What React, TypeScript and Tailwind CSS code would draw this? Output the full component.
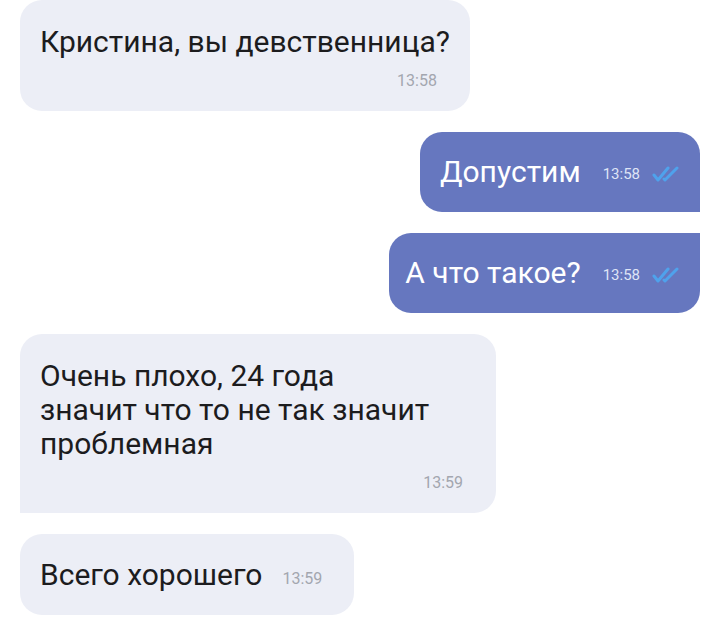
const Checks = () => (
  <svg width="28" height="16" viewBox="0 0 28 16" className="shrink-0">
    <path
      d="M2 9l4 5L16 2M12 13l1 1L25 2"
      stroke="#4fa2ec"
      strokeWidth="3"
      fill="none"
      strokeLinecap="round"
      strokeLinejoin="round"
    />
  </svg>
);

const App = () => {
  return (
    <div className="flex h-[629px] w-[719px] flex-col gap-[21px] overflow-hidden bg-white pl-5 pr-[19px] font-['Roboto',sans-serif] text-[30px] leading-[34px] text-[#1c1c1e]">
      {/* Incoming */}
      <div className="flex w-fit flex-col rounded-[22px] bg-[#eceef6] pb-[20px] pl-5 pr-5 pt-[25px]">
        <p>Кристина, вы девственница?</p>
        <span className="mr-[13px] mt-3 self-end text-[16px] leading-5 text-[#a3a6af]">13:58</span>
      </div>

      {/* Outgoing */}
      <div className="flex flex-col items-end gap-[21px]">
        <div className="flex h-[80px] items-center rounded-[22px] rounded-br-none bg-[#6677bf] pl-5 pr-5 text-white">
          <span>Допустим</span>
          <span className="ml-[22px] mt-[4px] text-[15px] leading-5 text-[#dfe4f6]">13:58</span>
          <span className="ml-[12px] mt-[4px]">
            <Checks />
          </span>
        </div>
        <div className="flex h-[80px] items-center rounded-[22px] rounded-tr-none bg-[#6677bf] pl-4 pr-5 text-white">
          <span>А что такое?</span>
          <span className="ml-[22px] mt-[4px] text-[15px] leading-5 text-[#dfe4f6]">13:58</span>
          <span className="ml-[12px] mt-[4px]">
            <Checks />
          </span>
        </div>
      </div>

      {/* Incoming group */}
      <div className="flex w-[476px] flex-col rounded-[22px] rounded-bl-none bg-[#eceef6] pb-[20px] pl-5 pr-5 pt-[25px]">
        <p>
          Очень плохо, 24 года
          <br />
          значит что то не так значит
          <br />
          проблемная
        </p>
        <span className="mr-[13px] mt-3 self-end text-[16px] leading-5 text-[#a3a6af]">13:59</span>
      </div>
      <div className="flex h-[81px] w-fit items-center rounded-[22px] bg-[#eceef6] pl-5 pr-8">
        <span>Всего хорошего</span>
        <span className="ml-5 mt-[8px] text-[16px] leading-5 text-[#a3a6af]">13:59</span>
      </div>
    </div>
  );
};

export default App;
